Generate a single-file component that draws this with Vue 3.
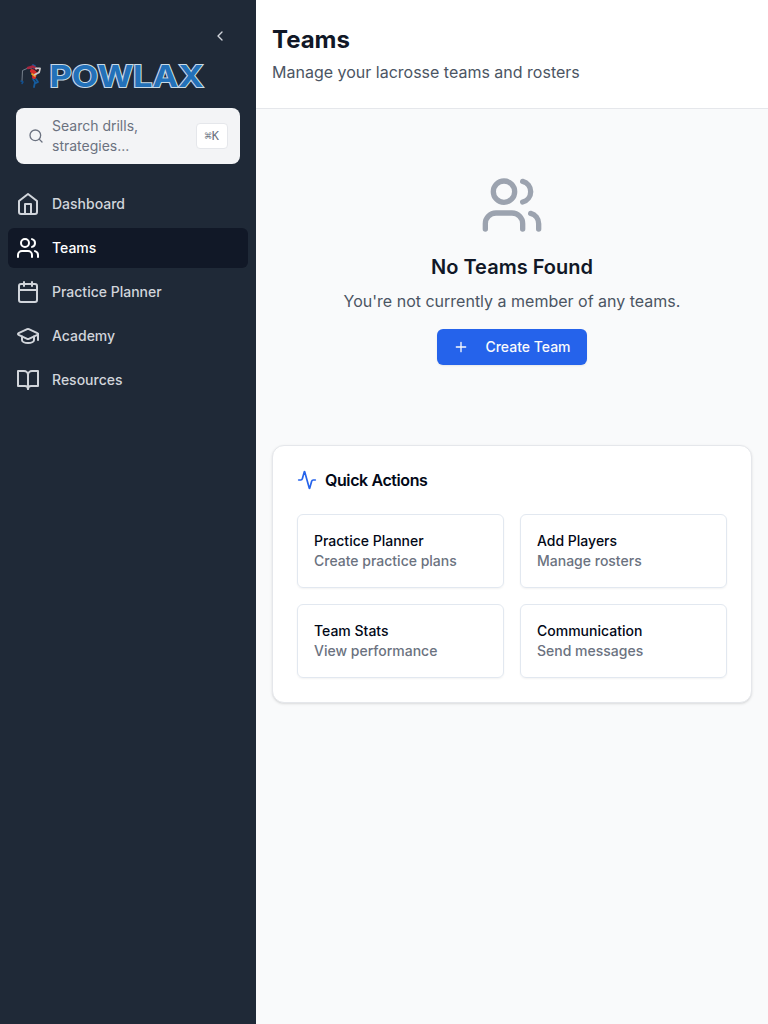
<script setup>
const users = [
  'M16 21v-2a4 4 0 0 0-4-4H6a4 4 0 0 0-4 4v2',
  'M13 7a4 4 0 1 1-8 0a4 4 0 0 1 8 0',
  'M22 21v-2a4 4 0 0 0-3-3.87',
  'M16 3.13a4 4 0 0 1 0 7.75',
]
const nav = [
  { label: 'Dashboard', paths: ['m3 9 9-7 9 7v11a2 2 0 0 1-2 2H5a2 2 0 0 1-2-2z', 'M9 22V12h6v10'] },
  { label: 'Teams', active: true, paths: users },
  { label: 'Practice Planner', paths: ['M8 2v4', 'M16 2v4', 'M5 4h14a2 2 0 0 1 2 2v14a2 2 0 0 1-2 2H5a2 2 0 0 1-2-2V6a2 2 0 0 1 2-2z', 'M3 10h18'] },
  { label: 'Academy', paths: ['M21.42 10.922a1 1 0 0 0-.019-1.838L12.83 5.18a2 2 0 0 0-1.66 0L2.6 9.08a1 1 0 0 0 0 1.832l8.57 3.908a2 2 0 0 0 1.66 0z', 'M22 10v6', 'M6 12.5V16a6 3 0 0 0 12 0v-3.5'] },
  { label: 'Resources', paths: ['M2 3h6a4 4 0 0 1 4 4v14a3 3 0 0 0-3-3H2z', 'M22 3h-6a4 4 0 0 0-4 4v14a3 3 0 0 1 3-3h7z'] },
]
const actions = [
  { title: 'Practice Planner', text: 'Create practice plans' },
  { title: 'Add Players', text: 'Manage rosters' },
  { title: 'Team Stats', text: 'View performance' },
  { title: 'Communication', text: 'Send messages' },
]
</script>

<template>
  <div class="shell">
    <aside class="sidebar">
      <div class="collapse">
        <svg class="icon chevron" viewBox="0 0 24 24"><path d="m15 18-6-6 6-6" /></svg>
      </div>
      <svg class="logo" width="192" height="44" viewBox="0 -6 192 44">
        <g fill="none" stroke-linecap="round" stroke-linejoin="round" transform="translate(0 1)">
          <path d="M6 20 6.500 9.500 11 7.500 16 7" stroke="#77818d" stroke-width="1" />
          <path d="m5 20 2 1-1 1.500" stroke="#124f8e" stroke-width="1.500" />
          <path d="m17 4 2 1-1 2M17 18l2 3-1 5M20 18l2 3-2 1" stroke="#155b9d" stroke-width="1.800" />
          <path d="m12 7 5-1.500 3 2" stroke="#a72740" stroke-width="2.500" />
          <path d="m16 10 3 2-1 4" stroke="#d62c2c" stroke-width="4" />
          <path d="m16 13 3 2" stroke="#eba629" stroke-width="1.700" />
          <path d="M20 7.500h4l-1 4-4 2" stroke="#cbc9ca" stroke-width="1.900" />
          <path d="m21 10 1-1" stroke="#341e25" stroke-width="2" />
        </g>
        <text class="wordmark" x="33.500" y="27.200" textLength="154" lengthAdjust="spacingAndGlyphs">POWLAX</text>
      </svg>
      <div class="search">
        <svg class="icon search-icon" viewBox="0 0 24 24"><circle cx="11" cy="11" r="8" /><path d="m21 21-4.300-4.300" /></svg>
        <span class="placeholder">Search drills, strategies...</span>
        <kbd>⌘K</kbd>
      </div>
      <nav>
        <a v-for="item in nav" :key="item.label" :class="{ active: item.active }">
          <svg class="icon nav-icon" viewBox="0 0 24 24"><path v-for="p in item.paths" :key="p" :d="p" /></svg>
          <span>{{ item.label }}</span>
        </a>
      </nav>
    </aside>
    <main>
      <header>
        <h1>Teams</h1>
        <p>Manage your lacrosse teams and rosters</p>
      </header>
      <section class="empty">
        <svg class="icon empty-icon" viewBox="0 0 24 24"><path v-for="p in users" :key="p" :d="p" /></svg>
        <h2>No Teams Found</h2>
        <p>You're not currently a member of any teams.</p>
        <button>
          <svg class="icon plus" viewBox="0 0 24 24"><path d="M5 12h14M12 5v14" /></svg>
          <span>Create Team</span>
        </button>
      </section>
      <section class="card">
        <h3>
          <svg class="icon activity" viewBox="0 0 24 24"><path d="M22 12h-2.480a2 2 0 0 0-1.930 1.460l-2.350 8.360a.25.25 0 0 1-.48 0L9.240 2.180a.25.25 0 0 0-.48 0l-2.350 8.360A2 2 0 0 1 4.490 12H2" /></svg>
          <span>Quick Actions</span>
        </h3>
        <div class="grid">
          <div v-for="a in actions" :key="a.title" class="action">
            <strong>{{ a.title }}</strong>
            <span>{{ a.text }}</span>
          </div>
        </div>
      </section>
    </main>
  </div>
</template>

<style>
body { margin: 0; }
</style>

<style scoped>
* { box-sizing: border-box; }
.shell { display: flex; min-height: 100vh; background: #f9fafb; font-family: Inter, "Liberation Sans", sans-serif; }
h1, h2, h3, p { margin: 0; }
.icon { display: block; flex: none; fill: none; stroke: currentColor; stroke-width: 2; stroke-linecap: round; stroke-linejoin: round; }
.sidebar { width: 256px; flex: none; background: #1f2937; padding-top: 28px; }
.collapse { display: flex; justify-content: flex-end; padding-right: 28px; color: #d1d5db; }
.chevron { width: 16px; height: 16px; }
.logo { display: block; margin: 10px 0 0 16px; overflow: visible; }
.wordmark { font-family: Inter, sans-serif; font-size: 29.5px; font-weight: 700; fill: #2371b9; stroke: #c8d9e5; stroke-width: 2px; paint-order: stroke; }
.search { display: flex; align-items: center; gap: 8px; height: 56px; margin: 10px 16px 20px; padding: 8px 12px; border-radius: 8px; background: #f3f4f6; color: #6b7280; font-size: 14px; line-height: 20px; }
.search-icon { width: 16px; height: 16px; }
.placeholder { flex: 1; }
kbd { display: flex; align-items: center; height: 26px; padding: 0 8px; border: 1px solid #e5e7eb; border-radius: 4px; background: #fff; font-family: "DejaVu Sans Mono", monospace; font-size: 12px; line-height: 16px; }
nav { display: flex; flex-direction: column; gap: 4px; padding: 0 8px; }
nav a { display: flex; align-items: center; gap: 12px; height: 40px; padding: 0 8px; border-radius: 6px; color: #d1d5db; font-size: 14px; font-weight: 500; line-height: 20px; }
nav a.active { background: #111827; color: #fff; }
.nav-icon { width: 24px; height: 24px; }
main { flex: 1; min-width: 0; }
header { height: 109px; padding: 24px 16px; border-bottom: 1px solid #e5e7eb; background: #fff; }
h1 { color: #111827; font-size: 24px; line-height: 32px; font-weight: 700; }
header p { margin-top: 4px; color: #4b5563; font-size: 16px; line-height: 24px; }
.empty { display: flex; flex-direction: column; align-items: center; padding-top: 64px; height: 320px; }
.empty-icon { width: 64px; height: 64px; color: #9ca3af; }
h2 { margin-top: 16px; color: #111827; font-size: 20px; line-height: 28px; font-weight: 600; }
.empty p { margin-top: 8px; color: #4b5563; font-size: 16px; line-height: 24px; }
button { display: flex; align-items: center; gap: 16px; height: 36px; margin-top: 16px; padding: 0 16px; border: 0; border-radius: 6px; background: #2563eb; color: #f8fafc; font: 500 14px/20px Inter, sans-serif; box-shadow: 0 1px 2px rgba(0,0,0,.08); }
.plus { width: 16px; height: 16px; }
.card { margin: 16px 16px 0; height: 258px; padding: 24px; border: 1px solid #e5e7eb; border-radius: 12px; background: #fff; box-shadow: 0 1px 3px rgba(0,0,0,.1), 0 1px 2px -1px rgba(0,0,0,.1); }
h3 { display: flex; align-items: center; gap: 8px; height: 20px; color: #020817; font-size: 16px; line-height: 16px; font-weight: 600; letter-spacing: -0.4px; }
.activity { width: 20px; height: 20px; color: #2563eb; }
.grid { display: grid; grid-template-columns: 1fr 1fr; gap: 16px; margin-top: 24px; }
.action { display: flex; flex-direction: column; justify-content: center; height: 74px; padding: 0 16px; border: 1px solid #e2e8f0; border-radius: 6px; font-size: 14px; line-height: 20px; font-weight: 500; box-shadow: 0 1px 2px rgba(0,0,0,.05); }
.action strong { color: #020817; font-weight: 500; }
.action span { color: #6b7280; }
</style>
